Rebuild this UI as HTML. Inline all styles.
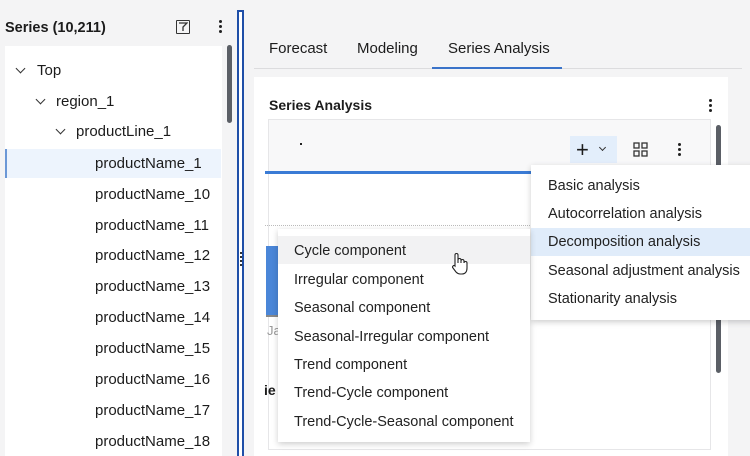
<!DOCTYPE html>
<html><head><style>
*{box-sizing:border-box;margin:0;padding:0}
body{width:750px;height:456px;overflow:hidden;background:#f4f4f5;font-family:"Liberation Sans",sans-serif;color:#1c1c1c;position:relative}
.a{position:absolute}
.t{position:absolute;font-size:15px;white-space:nowrap;line-height:18px}
.chev{position:absolute;width:7px;height:7px;border-right:1.5px solid #333;border-bottom:1.5px solid #333;transform:rotate(45deg)}
.mi{position:absolute;left:0;right:0;height:28px;font-size:14.5px;line-height:28px;color:#222;white-space:nowrap}
</style></head><body>
<div class="t" style="left:5px;top:19px;font-weight:bold;font-size:14.5px">Series (10,211)</div>
<div class="a" style="left:176px;top:20px;width:14px;height:14px;border:1.5px solid #333;border-radius:1px"></div>
<svg class="a" style="left:178px;top:22px" width="10" height="10"><path d="M1 1H9L5 5V9" fill="none" stroke="#333" stroke-width="1.3"/></svg>
<div class="a" style="left:219px;top:20px;width:3px;height:3px;background:#222;border-radius:50%;box-shadow:0 5px #222,0 10px #222"></div>
<div class="a" style="left:5px;top:46px;width:217px;height:410px;background:#fff"></div>
<div class="a" style="left:227px;top:45px;width:5px;height:78px;background:#5b5f66;border-radius:3px"></div>
<div class="chev" style="left:17px;top:65px"></div><div class="t" style="left:37px;top:62px">Top</div>
<div class="chev" style="left:37px;top:96px"></div><div class="t" style="left:56px;top:93px">region_1</div>
<div class="chev" style="left:57px;top:126px"></div><div class="t" style="left:76px;top:123px">productLine_1</div>
<div class="a" style="left:5px;top:149px;width:216px;height:29px;background:#edf4fd;border-left:2px solid #6c98d6"></div>
<div class="t" style="left:95px;top:155px">productName_1</div>
<div class="t" style="left:95px;top:186px">productName_10</div>
<div class="t" style="left:95px;top:217px">productName_11</div>
<div class="t" style="left:95px;top:247px">productName_12</div>
<div class="t" style="left:95px;top:278px">productName_13</div>
<div class="t" style="left:95px;top:309px">productName_14</div>
<div class="t" style="left:95px;top:340px">productName_15</div>
<div class="t" style="left:95px;top:371px">productName_16</div>
<div class="t" style="left:95px;top:402px">productName_17</div>
<div class="t" style="left:95px;top:433px">productName_18</div>
<div class="a" style="left:237px;top:10px;width:7px;height:446px;border:2px solid #1f4fa8;border-bottom:none;background:#fff"></div>
<div class="a" style="left:240px;top:252px;width:2px;height:14px;border-left:2px dotted #333"></div>
<div class="t" style="left:269px;top:40px">Forecast</div>
<div class="t" style="left:357px;top:40px">Modeling</div>
<div class="t" style="left:448px;top:40px">Series Analysis</div>
<div class="a" style="left:254px;top:68px;width:488px;height:1px;background:#dcdcde"></div>
<div class="a" style="left:432px;top:67px;width:130px;height:2px;background:#3a73c9"></div>
<div class="a" style="left:254px;top:77px;width:474px;height:379px;background:#fff"></div>
<div class="t" style="left:269px;top:96px;font-weight:bold;font-size:14px">Series Analysis</div>
<div class="a" style="left:709px;top:99px;width:3px;height:3px;background:#222;border-radius:50%;box-shadow:0 5px #222,0 10px #222"></div>
<div class="a" style="left:268px;top:119px;width:443px;height:331px;border:1px solid #e6e6e8;background:#fff"></div>
<div class="a" style="left:269px;top:120px;width:441px;height:51px;background:#f8f8f9"></div>
<div class="a" style="left:300px;top:143px;width:2px;height:2px;background:#222"></div>
<div class="a" style="left:570px;top:136px;width:47px;height:27px;background:#e3eefb"></div>
<div class="t" style="left:576px;top:137px;font-size:22px;line-height:26px">+</div>
<div class="chev" style="left:600px;top:145px;width:5px;height:5px;border-width:1px"></div>
<svg class="a" style="left:633px;top:142px" width="16" height="16"><g fill="none" stroke="#333" stroke-width="1.3"><rect x="1" y="1" width="5" height="5"/><rect x="9" y="1" width="5" height="5"/><rect x="1" y="9" width="5" height="5"/><rect x="9" y="9" width="5" height="5"/></g></svg>
<div class="a" style="left:678px;top:143px;width:3px;height:3px;background:#222;border-radius:50%;box-shadow:0 5px #222,0 10px #222"></div>
<div class="a" style="left:265px;top:171px;width:266px;height:3px;background:#3a7bd5"></div>
<div class="a" style="left:265px;top:225px;width:265px;height:1px;border-top:1px dotted #bbb"></div>
<div class="a" style="left:266px;top:246px;width:12px;height:70px;background:#4a86d8"></div>
<div class="a" style="left:266px;top:315px;width:12px;height:2px;background:#888"></div>
<div class="t" style="left:267px;top:322px;color:#999;font-size:13px">Ja</div>
<div class="t" style="left:264px;top:381px;font-weight:bold;font-size:14px">ie</div>
<div class="a" style="left:716px;top:125px;width:5px;height:248px;background:#5b5f66;border-radius:3px"></div>
<div class="a" style="left:531px;top:165px;width:230px;height:155px;background:#fff;box-shadow:0 2px 6px rgba(0,0,0,.2)">
<div class="mi" style="top:7px;padding-left:17px">Basic analysis</div>
<div class="mi" style="top:35px;padding-left:17px">Autocorrelation analysis</div>
<div class="mi" style="top:63px;padding-left:17px;background:#e0ecfa">Decomposition analysis</div>
<div class="mi" style="top:92px;padding-left:17px">Seasonal adjustment analysis</div>
<div class="mi" style="top:120px;padding-left:17px">Stationarity analysis</div>
</div>
<div class="a" style="left:278px;top:229px;width:252px;height:213px;background:#fff;box-shadow:0 2px 6px rgba(0,0,0,.2)">
<div class="mi" style="top:7px;padding-left:16px;background:#f2f2f3;line-height:30px">Cycle component</div>
<div class="mi" style="top:37px;padding-left:16px">Irregular component</div>
<div class="mi" style="top:65px;padding-left:16px">Seasonal component</div>
<div class="mi" style="top:94px;padding-left:16px">Seasonal-Irregular component</div>
<div class="mi" style="top:122px;padding-left:16px">Trend component</div>
<div class="mi" style="top:150px;padding-left:16px">Trend-Cycle component</div>
<div class="mi" style="top:179px;padding-left:16px">Trend-Cycle-Seasonal component</div>
</div>
<svg class="a" style="left:450px;top:252px" width="20" height="24"><path d="M5 14V3a1.5 1.5 0 0 1 3 0v8V8a1.5 1.5 0 0 1 3 0v3V9a1.5 1.5 0 0 1 3 0v2a1.5 1.5 0 0 1 3 0v5c0 4-2 6-5 6h-2c-2 0-3-1-4-2l-3-4a1.4 1.4 0 0 1 2-2z" fill="#fff" stroke="#222" stroke-width="1.1"/></svg>
</body></html>
